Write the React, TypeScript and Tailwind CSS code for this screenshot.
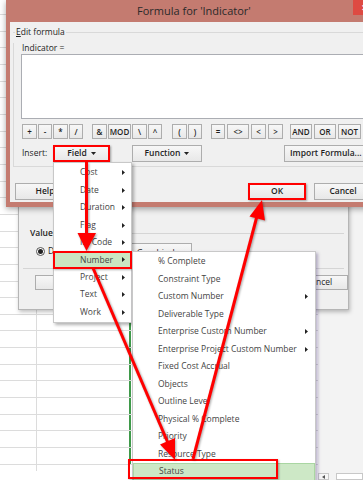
import React from 'react';

const ui = "font-['Open_Sans',sans-serif]";

const sheetRows = Array.from({ length: 27 });

const fieldItems = ['Cost', 'Date', 'Duration', 'Flag', 'ID/Code', 'Number', 'Project', 'Text', 'Work'];

const numberItems: { label: string; sub?: boolean }[] = [
  { label: '% Complete' },
  { label: 'Constraint Type' },
  { label: 'Custom Number', sub: true },
  { label: 'Deliverable Type' },
  { label: 'Enterprise Custom Number', sub: true },
  { label: 'Enterprise Project Custom Number', sub: true },
  { label: 'Fixed Cost Accrual' },
  { label: 'Objects' },
  { label: 'Outline Level' },
  { label: 'Physical % Complete' },
  { label: 'Priority' },
  { label: 'Resource Type' },
  { label: 'Status' },
];

function MenuArrow() {
  return (
    <svg width="3" height="5" viewBox="0 0 3 5" className="shrink-0">
      <polygon points="0,0 3,2.5 0,5" fill="#222" />
    </svg>
  );
}

function Caret() {
  return (
    <svg width="5" height="3" viewBox="0 0 5 3" className="ml-[4px] shrink-0">
      <polygon points="0,0 5,0 2.5,3" fill="#222" />
    </svg>
  );
}

function Btn({ className = '', children }: { className?: string; children?: React.ReactNode }) {
  return (
    <div
      className={`flex shrink-0 items-center justify-center border border-[#adadad] bg-gradient-to-b from-[#f7f7f7] to-[#e8e8e8] text-[#1e1e1e] ${className}`}
    >
      {children}
    </div>
  );
}

function OpGroup({ ops, className = '' }: { ops: [string, string][]; className?: string }) {
  return (
    <div className={`flex ${className}`}>
      {ops.map(([label, w], i) => (
        <Btn key={i} className={`h-[15px] text-[8px] font-semibold ${w}`}>
          {label}
        </Btn>
      ))}
    </div>
  );
}

function Sheet() {
  return (
    <div className="flex h-full">
      <div className="w-[318px] bg-white">
        <div className="flex h-[15px] border-b border-[#dcdcdc]">
          <div className="w-[37px] border-r border-[#dcdcdc]" />
          <div className="w-[94px] border-r-2 border-[#3f9a4a]" />
        </div>
        {sheetRows.map((_, i) => (
          <div key={i} className="flex h-[16.67px] border-b border-[#dcdcdc]">
            <div className="w-[37px] border-r border-[#dcdcdc]" />
            <div className="w-[94px] border-r-2 border-[#3f9a4a]" />
          </div>
        ))}
        <div className="flex h-[6px]">
          <div className="w-[37px] border-r border-[#dcdcdc]" />
        </div>
      </div>
      <div className="flex flex-1 flex-col justify-end bg-[#f3f3f3]">
        <div className="flex h-[7px]">
          <div className="flex w-[11px] items-center justify-center border border-[#c8c8c8] bg-[#f7f7f7]">
            <svg width="3" height="4" viewBox="0 0 3 4">
              <polygon points="3,0 0,2 3,4" fill="#555" />
            </svg>
          </div>
          <div className="ml-[7px] flex-1 border border-[#c8c8c8] bg-white" />
        </div>
      </div>
    </div>
  );
}

function BehindDialog() {
  return (
    <div className={`absolute left-[18px] top-[196px] flex h-[114px] w-[331px] flex-col border border-[#b5b5b5] bg-[#f0f0f0] shadow-[1px_2px_4px_rgba(0,0,0,0.25)] ${ui}`}>
      <div className="h-[30px]" />
      <div className="flex h-[12px] items-center pl-[11px] pr-[4px]">
        <span className="text-[8.5px] font-semibold text-[#1e1e1e]">Values to display</span>
        <div className="ml-[3px] h-px flex-1 bg-[#d5d5d5]" />
      </div>
      <div className="mt-[3px] flex h-[18px] items-center pl-[17px]">
        <div className="flex h-[9px] w-[9px] items-center justify-center rounded-full border border-[#555] bg-white">
          <div className="h-[5px] w-[5px] rounded-full bg-[#222]" />
        </div>
        <span className="ml-[3px] text-[8.5px] text-[#1e1e1e]">Data</span>
        <Btn className="ml-[60px] h-[17px] w-[65px] items-end overflow-hidden whitespace-nowrap text-[8.5px] leading-[12px]">
          Graphical...
        </Btn>
      </div>
      <div className="mx-[4px] mt-[8px] h-px bg-[#d5d5d5]" />
      <div className="mt-[6px] flex h-[15px] pl-[16px]">
        <Btn className="w-[66px] text-[8.5px]">Help</Btn>
        <Btn className="ml-[189px] w-[58px] text-[8.5px]">Cancel</Btn>
      </div>
    </div>
  );
}

function FormulaDialog() {
  return (
    <div className={`absolute left-[6px] top-0 flex h-[207px] w-[380px] flex-col bg-[#c47b70] shadow-[0_2px_6px_rgba(0,0,0,0.35)] ${ui}`}>
      <div className="flex h-[22px] items-start pr-[9px]">
        <span className="ml-[131px] mt-[3px] text-[11px] leading-[15px] text-[#2a2a2a]">Formula for 'Indicator'</span>
        <div className="ml-auto flex h-[15px] w-[24px] items-center justify-center bg-[#de4a42] text-[9px] leading-none text-white">
          ✕
        </div>
      </div>
      <div className="mx-[4px] flex h-[180px] flex-col bg-[#f0f0f0] text-[8.5px] text-[#1e1e1e]">
        <div className="ml-[3px] flex h-[21px] items-center">
          <div className="h-px w-[2px] self-center bg-[#d9d9d9]" />
          <span className="px-px">
            <span className="underline">E</span>dit formula
          </span>
          <div className="h-px flex-1 bg-[#d9d9d9]" />
        </div>
        <div className="ml-[3px] flex flex-col border-b border-l border-[#d9d9d9] pb-[4px] pl-[7px]">
          <div className="h-[10px] pl-px leading-[10px]">Indicator =</div>
          <div className="mt-px h-[65px] border border-[#abadb3] bg-white" />
          <div className="mt-[5px] flex h-[15px] pl-[1px]">
            <OpGroup
              className="gap-px"
              ops={[
                ['+', 'w-[15px]'],
                ['-', 'w-[14px]'],
                ['*', 'w-[15px]'],
                ['/', 'w-[14px]'],
              ]}
            />
            <OpGroup
              className="ml-[9px] gap-px"
              ops={[
                ['&', 'w-[15px]'],
                ['MOD', 'w-[23px]'],
                ['\\', 'w-[15px]'],
                ['^', 'w-[14px]'],
              ]}
            />
            <OpGroup
              className="ml-[10px] gap-px"
              ops={[
                ['(', 'w-[15px]'],
                [')', 'w-[14px]'],
              ]}
            />
            <OpGroup
              className="ml-[9px] gap-[2px]"
              ops={[
                ['=', 'w-[14px]'],
                ['<>', 'w-[22px]'],
                ['<', 'w-[15px]'],
                ['>', 'w-[15px]'],
              ]}
            />
            <OpGroup
              className="ml-[7px] gap-[2px]"
              ops={[
                ['AND', 'w-[22px]'],
                ['OR', 'w-[22px]'],
                ['NOT', 'w-[23px]'],
              ]}
            />
          </div>
          <div className="mt-[6px] flex h-[17px] items-center">
            <span className="w-[32px] pl-px">Insert:</span>
            <Btn className="h-[17px] w-[57px] border-2 border-[#ff0000] font-semibold shadow-[1px_1px_2px_rgba(0,0,0,0.35)]">
              Field
              <Caret />
            </Btn>
            <Btn className="ml-[22px] h-[17px] w-[70px] font-semibold">
              Function
              <Caret />
            </Btn>
            <Btn className="ml-[82px] h-[17px] w-[90px] justify-start pl-[5px] font-semibold">Import Formula...</Btn>
          </div>
        </div>
        <div className="mt-[16px] flex h-[17px]">
          <Btn className="ml-[5px] w-[60px] font-semibold">Help</Btn>
          <Btn className="ml-[173px] w-[58px] border-2 border-[#ff0000] font-semibold shadow-[1px_1px_2px_rgba(0,0,0,0.35)]">
            OK
          </Btn>
          <Btn className="ml-[8px] w-[58px] font-semibold">Cancel</Btn>
        </div>
      </div>
    </div>
  );
}

function FieldMenu() {
  return (
    <div className={`absolute left-[53px] top-[162px] flex h-[161px] w-[79px] flex-col border border-[#c8c8c8] bg-white py-px text-[8.5px] text-[#444] shadow-[2px_2px_3px_rgba(0,0,0,0.3)] ${ui}`}>
      {fieldItems.map((item) =>
        item === 'Number' ? (
          <div
            key={item}
            className="-mx-px flex h-[17.5px] items-center justify-between border-2 border-[#ff0000] bg-[#cbe6c2] pl-[25px] pr-[5px] shadow-[1px_1px_2px_rgba(0,0,0,0.3)]"
          >
            <span>{item}</span>
            <MenuArrow />
          </div>
        ) : (
          <div key={item} className="flex h-[17.5px] items-center justify-between pl-[26px] pr-[6px]">
            <span>{item}</span>
            <MenuArrow />
          </div>
        )
      )}
    </div>
  );
}

function NumberMenu() {
  return (
    <div className={`absolute left-[132px] top-[251px] flex h-[240px] w-[184px] flex-col border border-[#c8c8c8] bg-white pt-px text-[8.5px] text-[#444] shadow-[2px_2px_3px_rgba(60,40,110,0.35)] ${ui}`}>
      {numberItems.map((item) => (
        <div
          key={item.label}
          className={`flex h-[17.5px] shrink-0 items-center justify-between pl-[25px] pr-[7px] ${
            item.label === 'Status' ? 'border border-[#a9d6a2] bg-[#cde8c6]' : ''
          }`}
        >
          <span>{item.label}</span>
          {item.sub && <MenuArrow />}
        </div>
      ))}
    </div>
  );
}

function Arrows() {
  return (
    <svg
      width="363"
      height="480"
      viewBox="0 0 363 480"
      className="pointer-events-none absolute inset-0 drop-shadow-[1px_1px_1px_rgba(0,0,0,0.35)]"
    >
      <g stroke="#ff0000" strokeWidth="3" strokeLinecap="butt">
        <line x1="86.5" y1="162" x2="86.5" y2="236" />
        <line x1="93" y1="268" x2="168" y2="443" />
        <line x1="193" y1="459" x2="257" y2="216" />
      </g>
      <g fill="#ff0000">
        <polygon points="77.5,233 96,233 86.5,251" />
        <polygon points="175,438 160,444.5 175,460" />
        <polygon points="265,220.5 249.5,216.5 262,200" />
      </g>
    </svg>
  );
}

export default function App() {
  return (
    <div className="relative h-[480px] w-[363px] overflow-hidden bg-white">
      <Sheet />
      <BehindDialog />
      <FormulaDialog />
      <FieldMenu />
      <NumberMenu />
      <div className="absolute left-[128px] top-[459px] h-[20px] w-[150px] border-2 border-[#ff0000] shadow-[1px_1px_2px_rgba(0,0,0,0.3)]" />
      <Arrows />
    </div>
  );
}
